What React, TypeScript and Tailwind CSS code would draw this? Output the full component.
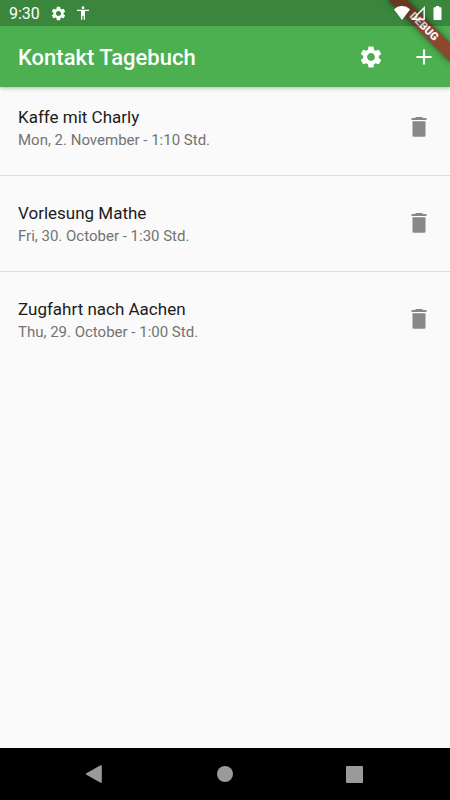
import React from 'react';
import { MdAccessibility, MdAdd, MdSettings } from 'react-icons/md';

interface Contact {
  title: string;
  details: string;
}

const contacts: Contact[] = [
  { title: 'Kaffe mit Charly', details: 'Mon, 2. November - 1:10 Std.' },
  { title: 'Vorlesung Mathe', details: 'Fri, 30. October - 1:30 Std.' },
  { title: 'Zugfahrt nach Aachen', details: 'Thu, 29. October - 1:00 Std.' },
];

// Translucent, so the green and the debug ribbon show through
const StatusBar: React.FC = () => {
  return (
    <div className="relative z-20 flex items-center justify-between h-[26px] pl-[9px] pr-2 bg-black/23 text-white">
      <div className="flex items-center">
        <span className="text-base leading-5 pt-0.5">9:30</span>
        <MdSettings className="size-[17px] ml-2.5" />
        <MdAccessibility className="size-4 ml-2" />
      </div>

      {/* Wifi, signal and battery */}
      <div className="flex items-center">
        <svg className="w-4 h-[14px]" viewBox="0 0 16 14" fill="currentColor">
          <path d="M8 14 0 3.400C2.200 1.200 5 0 8 0s5.800 1.200 8 3.400z" />
        </svg>
        <svg className="w-[14px] h-[14px] ml-px" viewBox="0 0 14 14" fill="none" stroke="currentColor" strokeWidth="1.400">
          <path d="M13.200 1.800v11.400H1.800z" />
        </svg>
        <svg className="w-[9px] h-[14px] ml-2" viewBox="0 0 9 14" fill="currentColor">
          <path d="M2.800 0h3.400v1.300h1.500q.8 0 .8.800v11.100q0 .8-.8.800H1.300q-.8 0-.8-.8V2.100q0-.8.8-.8h1.500z" />
        </svg>
      </div>
    </div>
  );
};

const AppBar: React.FC = () => {
  return (
    <header className="flex items-center justify-between h-[61px] pl-[18px] pr-[13px] text-white">
      <h1 className="text-[22px] font-medium pt-0.5">Kontakt Tagebuch</h1>
      <div className="flex items-center gap-[27px]">
        <button type="button" aria-label="Einstellungen">
          <MdSettings className="size-[26px]" />
        </button>
        <button type="button" aria-label="Hinzufügen">
          <MdAdd className="size-[26px]" />
        </button>
      </div>
    </header>
  );
};

const ContactRow: React.FC<Contact> = ({ title, details }) => {
  return (
    <div className="flex items-center justify-between h-20 px-[18px]">
      <div className="pt-0.5">
        <h2 className="text-[17px] leading-6 text-[#1c1c1c]">{title}</h2>
        <p className="text-[15px] leading-[22px] text-[#737373]">{details}</p>
      </div>
      <button type="button" aria-label={`${title} löschen`} className="text-[#888888]">
        <svg className="size-[26px]" viewBox="0 0 26 26" fill="currentColor">
          <path d="M9.500 3h7v1h4v2h-15V4h4zM6.500 7.300h13v14.200q0 1.200-1.200 1.200H7.700q-1.200 0-1.200-1.200z" />
        </svg>
      </button>
    </div>
  );
};

const NavigationBar: React.FC = () => {
  return (
    <nav className="flex items-center justify-between h-[52px] pl-[85px] pr-[87px] bg-black text-[#9a9a9a]">
      <button type="button" aria-label="Zurück">
        <svg className="w-[18px] h-[18px]" viewBox="0 0 18 18" fill="currentColor">
          <path d="M1.400 8.300 15.600.3q1.200-.5 1.200.8v15.800q0 1.300-1.200.8L1.400 9.700q-1-.7 0-1.400z" />
        </svg>
      </button>
      <button type="button" aria-label="Startseite" className="size-4 rounded-full bg-current"></button>
      <button type="button" aria-label="Übersicht" className="size-[17px] rounded-[1px] bg-current"></button>
    </nav>
  );
};

const DebugRibbon: React.FC = () => {
  return (
    <div className="absolute z-10 -right-[18px] top-5 flex items-center justify-center w-[88px] h-[13px] rotate-45 bg-[#a71c1c]/70 shadow-[0_0_6px_rgba(0,0,0,0.5)] text-[11px] leading-none font-black text-white">
      DEBUG
    </div>
  );
};

const App: React.FC = () => {
  return (
    <div className="relative flex flex-col min-h-screen overflow-hidden bg-[#fafafa] font-[Roboto,sans-serif]">
      <div className="bg-[#4caf50] shadow-[0_1px_4px_rgba(0,0,0,0.3)]">
        <StatusBar />
        <AppBar />
      </div>
      <DebugRibbon />

      {/* Contact list */}
      <main className="flex-1">
        {contacts.map((contact, index) => (
          <React.Fragment key={contact.title}>
            {index > 0 && (
              <div className="h-4 pt-2">
                <hr className="border-[#dcdcdc]" />
              </div>
            )}
            <ContactRow {...contact} />
          </React.Fragment>
        ))}
      </main>

      <NavigationBar />
    </div>
  );
};

export default App;
